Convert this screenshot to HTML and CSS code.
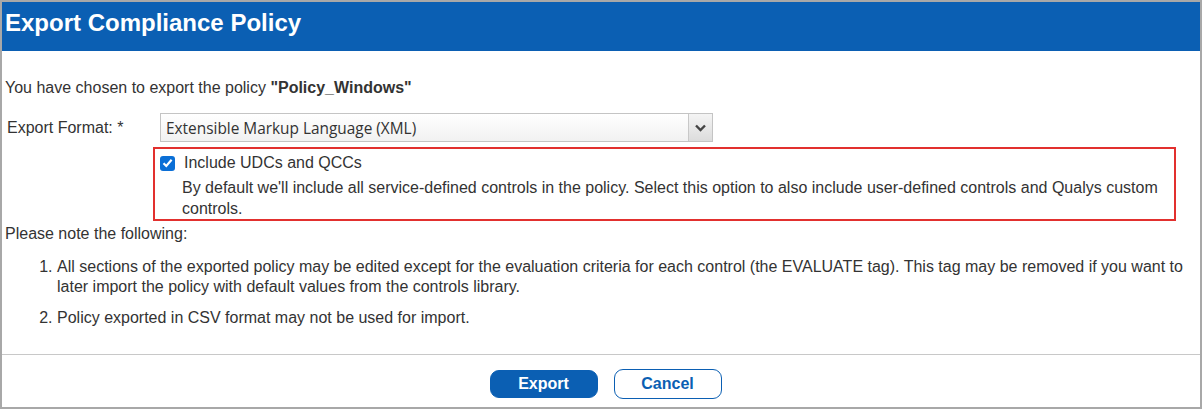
FILE: index.html
```html
<!DOCTYPE html>
<html>
<head>
<meta charset="utf-8">
<link rel="stylesheet" href="styles.css">
</head>
<body>
<div class="dialog">
  <div class="header">Export Compliance Policy</div>
  <div class="content">
    <p class="intro">You have chosen to export the policy <b>"Policy_Windows"</b></p>
    <div class="format-row">
      <span class="label">Export Format: *</span>
      <div class="select">
        <span class="select-text">Extensible Markup Language (XML)</span>
        <span class="select-btn">
          <svg width="11" height="8" viewBox="0 0 11 8"><path d="M1 1.5 L5.5 6 L10 1.5" fill="none" stroke="#444" stroke-width="2.4"/></svg>
        </span>
      </div>
    </div>
    <div class="option-box">
      <div class="check-row">
        <span class="checkbox">
          <svg width="11" height="10" viewBox="0 0 11 10"><path d="M1.5 5.2 L4.3 8 L9.6 1.8" fill="none" stroke="#fff" stroke-width="2.2"/></svg>
        </span>
        <span class="check-label">Include UDCs and QCCs</span>
      </div>
      <p class="desc">By default we'll include all service-defined controls in the policy. Select this option to also include user-defined controls and Qualys custom controls.</p>
    </div>
    <p class="note">Please note the following:</p>
    <ol class="notes">
      <li>All sections of the exported policy may be edited except for the evaluation criteria for each control (the EVALUATE tag). This tag may be removed if you want to later import the policy with default values from the controls library.</li>
      <li>Policy exported in CSV format may not be used for import.</li>
    </ol>
  </div>
  <div class="footer">
    <button class="btn btn-primary">Export</button>
    <button class="btn btn-secondary">Cancel</button>
  </div>
</div>
</body>
</html>
```
FILE: styles.css
```css
* { box-sizing: border-box; }
html, body { margin: 0; padding: 0; background: #fff; }
body { font-family: "Liberation Sans", Arial, sans-serif; color: #333; }
.dialog {
  width: 1202px;
  height: 409px;
  border: 2px solid #a8a8a8;
  display: flex;
  flex-direction: column;
}
.header {
  background: #0b5fb3;
  color: #fff;
  font-weight: bold;
  font-size: 24px;
  height: 49px;
  padding: 7px 0 0 3px;
}
.content {
  flex: 1;
  padding: 0 0 0 3px;
  font-size: 16px;
}
.intro { margin: 28px 0 0 0; line-height: 18px; }
.format-row { display: flex; align-items: center; margin-top: 16px; }
.label { width: 155px; padding-left: 2px; }
.select {
  width: 553px;
  height: 29px;
  border: 1px solid #c4c4c4;
  background: linear-gradient(#fff, #f1f1f1);
  display: flex;
  align-items: stretch;
}
.select-text { flex: 1; padding: 4px 0 0 5px; color: #333; font-family: "Open Sans", "Liberation Sans", sans-serif; font-size: 15.4px; }
.select-btn {
  width: 24px;
  border-left: 1px solid #c8c8c8;
  background: linear-gradient(#f4f4f4, #dcdcdc);
  display: flex; align-items: center; justify-content: center;
}
.option-box {
  margin: 5px 24px 0 148px;
  border: 2px solid #e2302e;
  padding: 5px 0 0 5px;
}
.check-row { display: flex; align-items: center; height: 18px; }
.checkbox {
  width: 15px; height: 15px;
  background: #0b6fd6;
  border-radius: 3px;
  display: flex; align-items: center; justify-content: center;
}
.check-label { margin-left: 9px; }
.desc { margin: 5px 0 0 22px; line-height: 21px; }
.note { margin: 4px 0 0 0; line-height: 18px; }
.notes { margin: 14px 0 0 0; padding-left: 52px; line-height: 20px; }
.notes li { margin-bottom: 11px; }
.footer {
  height: 53px;
  border-top: 1px solid #c8c8c8;
  display: flex;
  justify-content: center;
  align-items: center;
  gap: 16px;
  padding: 5px 0 0 9px;
}
.btn {
  width: 108px;
  height: 28px;
  border-radius: 9px;
  font-family: "Liberation Sans", Arial, sans-serif;
  font-weight: bold;
  font-size: 16px;
  padding: 0;
}
.btn-primary { background: #0b5fb3; color: #fff; border: 1px solid #0b5fb3; }
.btn-secondary { background: #fff; color: #0b5fb3; border: 1.5px solid #0b5fb3; height: 30px; }
```
